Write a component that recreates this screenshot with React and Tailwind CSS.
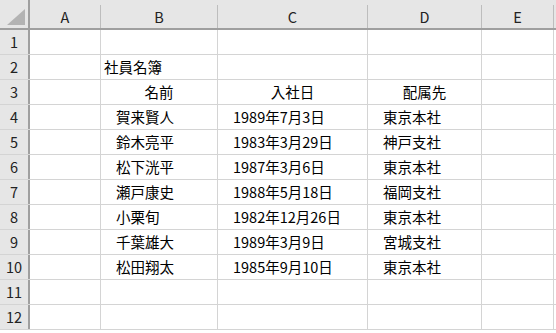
const cols = [
  { key: 'A', w: 'w-[71px]' },
  { key: 'B', w: 'w-[117px]' },
  { key: 'C', w: 'w-[150px]' },
  { key: 'D', w: 'w-[114px]' },
  { key: 'E', w: 'w-[72px]' },
];

const rows = [
  ['', '', '', '', ''],
  ['', '社員名簿', '', '', ''],
  ['', '名前', '入社日', '配属先', ''],
  ['', '賀来賢人', '1989年7月3日', '東京本社', ''],
  ['', '鈴木亮平', '1983年3月29日', '神戸支社', ''],
  ['', '松下洸平', '1987年3月6日', '東京本社', ''],
  ['', '瀬戸康史', '1988年5月18日', '福岡支社', ''],
  ['', '小栗旬', '1982年12月26日', '東京本社', ''],
  ['', '千葉雄大', '1989年3月9日', '宮城支社', ''],
  ['', '松田翔太', '1985年9月10日', '東京本社', ''],
  ['', '', '', '', ''],
  ['', '', '', '', ''],
];

function cellAlign(r, c) {
  if (r === 1 && c === 1) return 'justify-start pl-[3px]';
  if (r === 2) return 'justify-center';
  return 'justify-start pl-[15px]';
}

export default function App() {
  return (
    <div
      className="w-[556px] h-[333px] overflow-hidden bg-white text-[14.5px] text-black"
      style={{ fontFamily: '"Noto Sans CJK JP", "Noto Sans", sans-serif' }}
    >
      {/* column headers */}
      <div className="flex h-[30px] bg-[#e6e6e6] border-b-2 border-[#9f9f9f]">
        <div className="w-[30px] shrink-0 border-r-2 border-[#9f9f9f] flex items-end justify-end pr-[3px] pb-[3px]">
          <svg width="18" height="16" viewBox="0 0 18 16">
            <polygon points="18,0 18,16 0,16" fill="#b3b3b3" />
          </svg>
        </div>
        {cols.map((c) => (
          <div key={c.key} className={`${c.w} shrink-0 mt-[5px] border-r border-[#bdbdbd] flex items-center justify-center text-[#222]`}>
            {c.key}
          </div>
        ))}
      </div>

      {/* body */}
      {rows.map((row, r) => (
        <div key={r} className="flex h-[25px] border-b border-[#d4d4d4]">
          <div className="w-[30px] shrink-0 bg-[#e6e6e6] border-r-2 border-[#9f9f9f] flex items-center justify-center text-[#222]">
            {r + 1}
          </div>
          {cols.map((c, ci) => (
            <div key={c.key} className={`${c.w} shrink-0 border-r border-[#d4d4d4] flex items-center whitespace-nowrap ${cellAlign(r, ci)}`}>
              {row[ci]}
            </div>
          ))}
        </div>
      ))}
    </div>
  );
}
